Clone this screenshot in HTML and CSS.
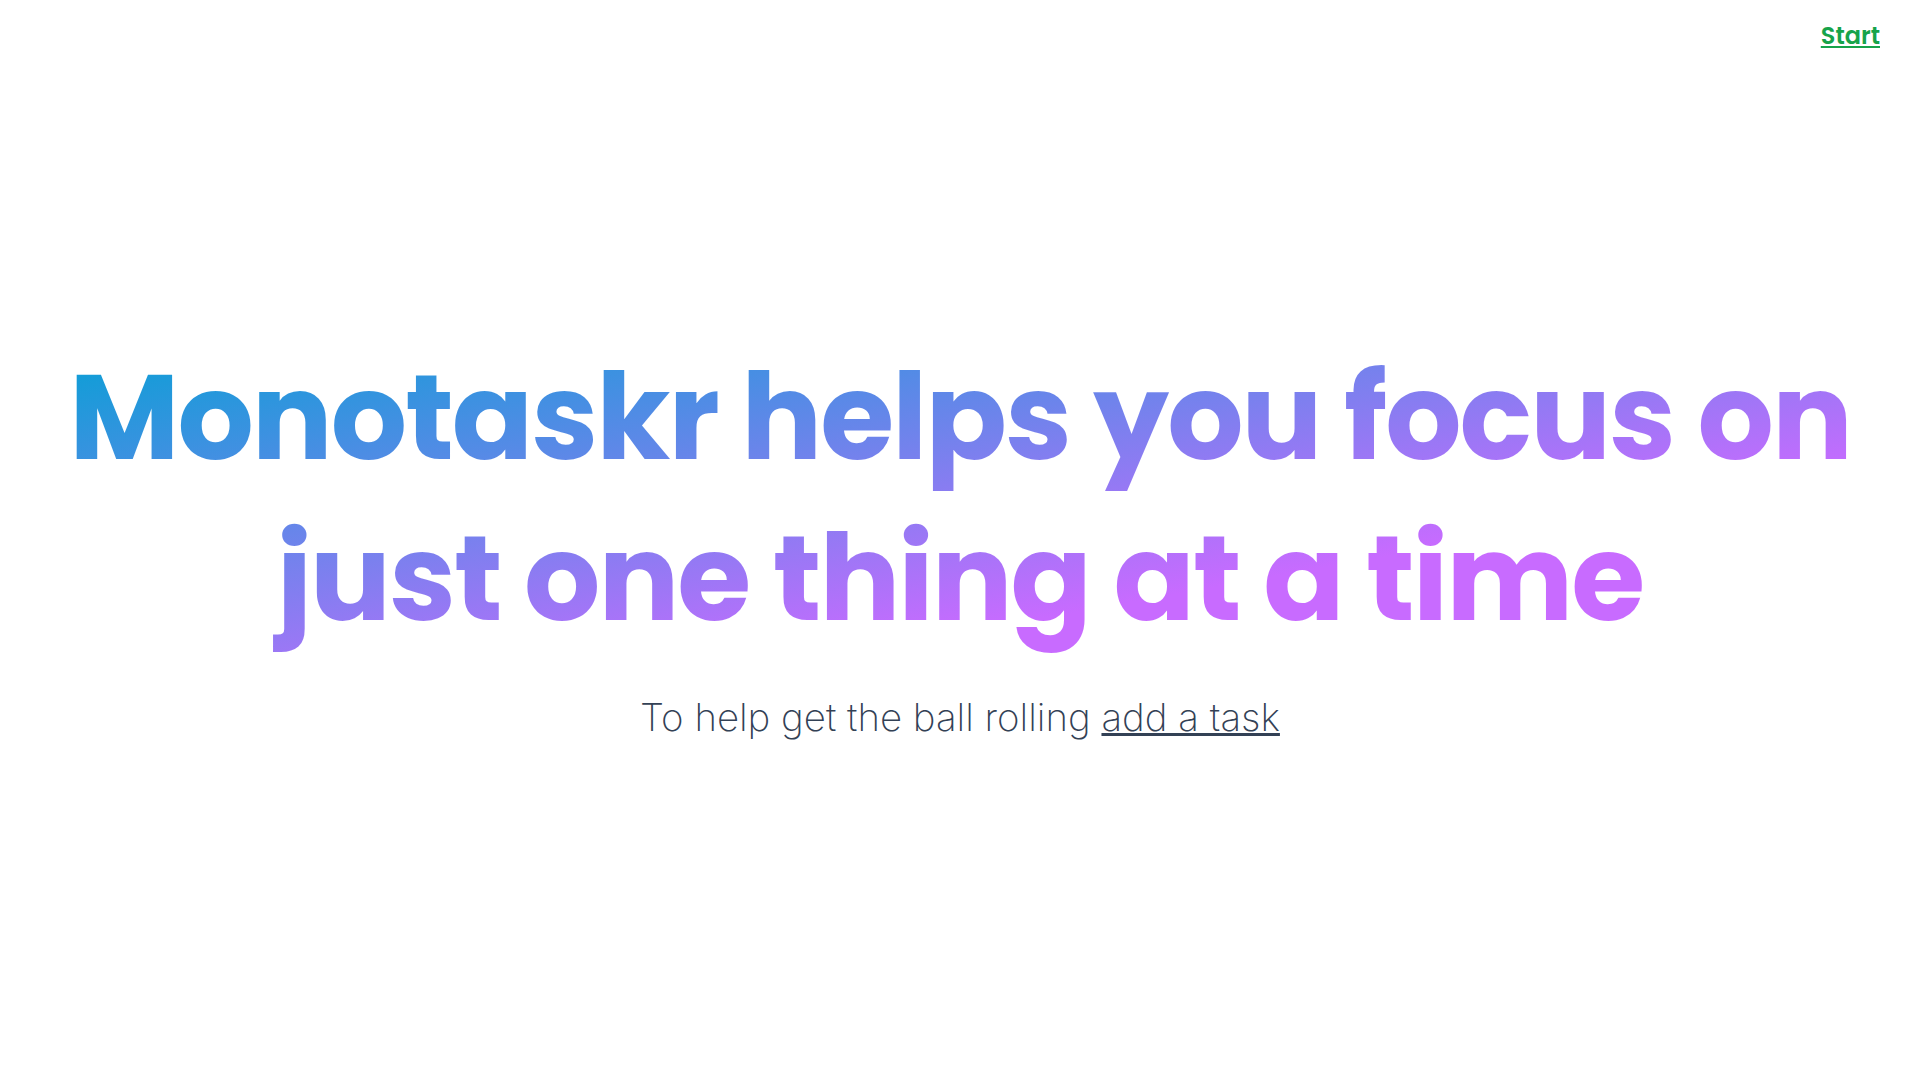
FILE: index.html
```html
<!DOCTYPE html>
<html lang="en">
<head>
<meta charset="utf-8">
<title>Monotaskr</title>
<link rel="stylesheet" href="styles.css">
</head>
<body>
<header class="topbar"><a class="start" href="#start">Start</a></header>
<main class="hero">
<h1 class="headline">Monotaskr helps you focus on <br>just one thing at a time</h1>
<p class="lead">To help get the ball rolling <a class="lead-link" href="#add">add a task</a></p>
</main>
</body>
</html>
```
FILE: styles.css
```css
* { box-sizing: border-box; }
body {
  margin: 0;
  min-height: 100vh;
  display: flex;
  flex-direction: column;
  background: #fff;
  color: #334155;
  font-family: Inter, "Liberation Sans", sans-serif;
}
.topbar {
  display: flex;
  justify-content: flex-end;
  padding: 20px 40px;
}
.start {
  color: #16a34a;
  font-family: Poppins, Inter, sans-serif;
  font-size: 24px;
  font-weight: 600;
  line-height: 32px;
}
.hero {
  flex: 1;
  display: flex;
  flex-direction: column;
  align-items: center;
  padding-top: 265px;
}
.headline {
  margin: 0;
  font-family: Poppins, Inter, sans-serif;
  font-size: 120px;
  font-weight: 700;
  line-height: 161px;
  letter-spacing: -2px;
  text-align: center;
  color: transparent;
  background: linear-gradient(to bottom right, #03a1d4, #c86bff 71%);
  -webkit-background-clip: text;
  background-clip: text;
}
.lead {
  margin: 34px 0 0;
  font-size: 2vw;
  font-weight: 200;
  line-height: 48px;
}
.lead-link {
  color: inherit;
  text-decoration-thickness: 3px;
}
```
